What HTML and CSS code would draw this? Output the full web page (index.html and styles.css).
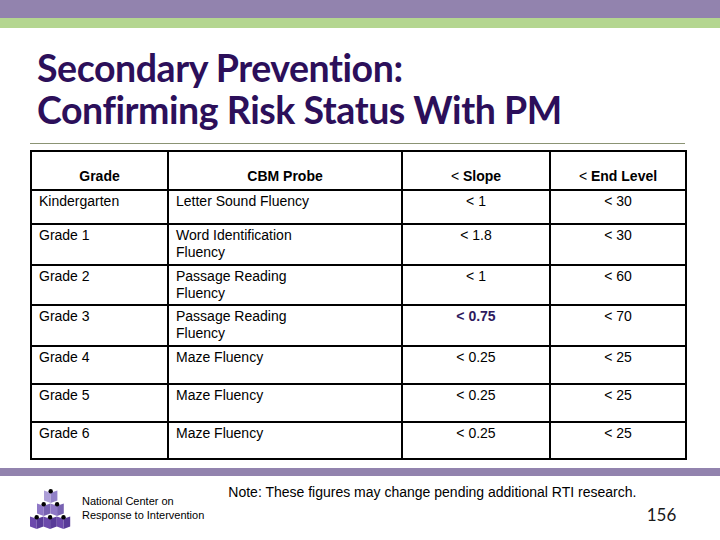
FILE: index.html
```html
<!DOCTYPE html>
<html lang="en">
<head>
<meta charset="utf-8">
<title>Secondary Prevention: Confirming Risk Status With PM</title>
<link rel="stylesheet" href="styles.css">
</head>
<body>
<div class="slide">
  <div class="topbar"></div>
  <div class="greenbar"></div>
  <h1 class="title">Secondary Prevention:<br>Confirming Risk Status With PM</h1>
  <div class="rule"></div>
  <table class="grid">
    <colgroup>
      <col class="c1"><col class="c2"><col class="c3"><col class="c4">
    </colgroup>
    <tr class="head">
      <th>Grade</th>
      <th>CBM Probe</th>
      <th><span class="reg">&lt;</span> Slope</th>
      <th><span class="reg">&lt;</span> End Level</th>
    </tr>
    <tr class="h34">
      <td>Kindergarten</td><td>Letter Sound Fluency</td><td class="num">&lt; 1</td><td class="num">&lt; 30</td>
    </tr>
    <tr class="h41">
      <td>Grade 1</td><td>Word Identification<br>Fluency</td><td class="num">&lt; 1.8</td><td class="num">&lt; 30</td>
    </tr>
    <tr class="h40">
      <td>Grade 2</td><td>Passage Reading<br>Fluency</td><td class="num">&lt; 1</td><td class="num">&lt; 60</td>
    </tr>
    <tr class="h41">
      <td>Grade 3</td><td>Passage Reading<br>Fluency</td><td class="num strong">&lt; 0.75</td><td class="num">&lt; 70</td>
    </tr>
    <tr class="h38">
      <td>Grade 4</td><td>Maze Fluency</td><td class="num">&lt; 0.25</td><td class="num">&lt; 25</td>
    </tr>
    <tr class="h38">
      <td>Grade 5</td><td>Maze Fluency</td><td class="num">&lt; 0.25</td><td class="num">&lt; 25</td>
    </tr>
    <tr class="h37">
      <td>Grade 6</td><td>Maze Fluency</td><td class="num">&lt; 0.25</td><td class="num">&lt; 25</td>
    </tr>
  </table>
  <div class="bottombar"></div>
  <div class="footer">
    <div class="brand">
      <svg class="logo" width="46" height="44" viewBox="0 0 46 44" aria-hidden="true">
        <g transform="translate(18,2)">
          <polygon points="0,1.5 6.7,3.8 6.7,14 0,11.6" fill="#ad9fd8"/>
          <polygon points="6.7,3.8 13.4,1.5 13.4,11.6 6.7,14" fill="#9282c8"/>
          <circle cx="6.7" cy="2.2" r="2.2" fill="#000"/>
        </g>
        <g transform="translate(11,15)">
          <polygon points="0,1.5 6.7,3.8 6.7,14 0,11.6" fill="#8f78c6"/>
          <polygon points="6.7,3.8 13.4,1.5 13.4,11.6 6.7,14" fill="#7862b2"/>
          <circle cx="6.7" cy="2.2" r="2.2" fill="#000"/>
        </g>
        <g transform="translate(24.4,15)">
          <polygon points="0,1.5 6.7,3.8 6.7,14 0,11.6" fill="#8f78c6"/>
          <polygon points="6.7,3.8 13.4,1.5 13.4,11.6 6.7,14" fill="#7862b2"/>
          <circle cx="6.7" cy="2.2" r="2.2" fill="#000"/>
        </g>
        <g transform="translate(4,28)">
          <polygon points="0,1.5 6.7,3.8 6.7,14 0,11.6" fill="#6c4aac"/>
          <polygon points="6.7,3.8 13.4,1.5 13.4,11.6 6.7,14" fill="#583b98"/>
          <circle cx="6.7" cy="2.2" r="2.2" fill="#000"/>
        </g>
        <g transform="translate(17.4,28)">
          <polygon points="0,1.5 6.7,3.8 6.7,14 0,11.6" fill="#6c4aac"/>
          <polygon points="6.7,3.8 13.4,1.5 13.4,11.6 6.7,14" fill="#583b98"/>
          <circle cx="6.7" cy="2.2" r="2.2" fill="#000"/>
        </g>
        <g transform="translate(30.8,28)">
          <polygon points="0,1.5 6.7,3.8 6.7,14 0,11.6" fill="#6c4aac"/>
          <polygon points="6.7,3.8 13.4,1.5 13.4,11.6 6.7,14" fill="#583b98"/>
          <circle cx="6.7" cy="2.2" r="2.2" fill="#000"/>
        </g>
      </svg>
      <div class="org">National Center on<br>Response to Intervention</div>
    </div>
    <div class="notes">
      <p class="note">Note: These figures may change pending additional RTI research.</p>
      <p class="page">156</p>
    </div>
  </div>
</div>
</body>
</html>
```
FILE: styles.css
```css
html, body {
  margin: 0;
  padding: 0;
  background: #ffffff;
}
.slide {
  width: 720px;
  height: 540px;
  overflow: hidden;
  background: #ffffff;
  font-family: "Liberation Sans", Arial, sans-serif;
  color: #000;
}
.topbar {
  height: 18px;
  background: #9283ae;
}
.greenbar {
  height: 10px;
  background: #b4d690;
}
.title {
  margin: 0;
  padding: 19px 0 0 37px;
  font-family: Lato, "Open Sans", sans-serif;
  font-weight: 700;
  font-size: 37.5px;
  line-height: 42px;
  color: #2c0f5a;
  letter-spacing: -0.45px;
}
.rule {
  margin: 12px 0 0 30px;
  width: 655px;
  height: 1px;
  background: #8b9474;
}
.grid {
  margin: 6px 0 0 30px;
  width: 655px;
  border-collapse: collapse;
  table-layout: fixed;
  font-size: 14px;
  line-height: 17px;
}
.c1 { width: 137px; }
.c2 { width: 234px; }
.c3 { width: 148px; }
.c4 { width: 136px; }
.grid th,
.grid td {
  border: 2px solid #000;
  padding: 2px 7px 0 7px;
  vertical-align: top;
  text-align: left;
  font-weight: 400;
}
.grid th {
  text-align: center;
  vertical-align: bottom;
  font-weight: 700;
  padding-bottom: 4px;
}
.grid th .reg { font-weight: 400; }
.grid td.num { text-align: center; }
.grid td.strong { font-weight: 700; color: #2e1a5e; }
.head { height: 39px; }
.h34 { height: 34px; }
.h37 { height: 37px; }
.h38 { height: 38px; }
.h40 { height: 40px; }
.h41 { height: 41px; }
.bottombar {
  margin-top: 8px;
  height: 8px;
  background: #9283ae;
}
.footer {
  display: flex;
  padding-left: 26px;
}
.brand {
  display: flex;
  align-items: center;
  gap: 10px;
  margin-top: 11px;
  height: 44px;
}
.logo { display: block; }
.org {
  font-size: 11px;
  line-height: 14px;
  margin-top: -3px;
}
.notes {
  margin-left: 24px;
  width: 448px;
  padding-top: 8px;
}
.note {
  margin: 0;
  font-size: 14px;
  line-height: 17px;
}
.page {
  margin: 4px 0 0 0;
  text-align: right;
  font-family: Lato, "Open Sans", sans-serif;
  font-size: 17px;
  line-height: 20px;
  color: #1a1a1a;
}
```
